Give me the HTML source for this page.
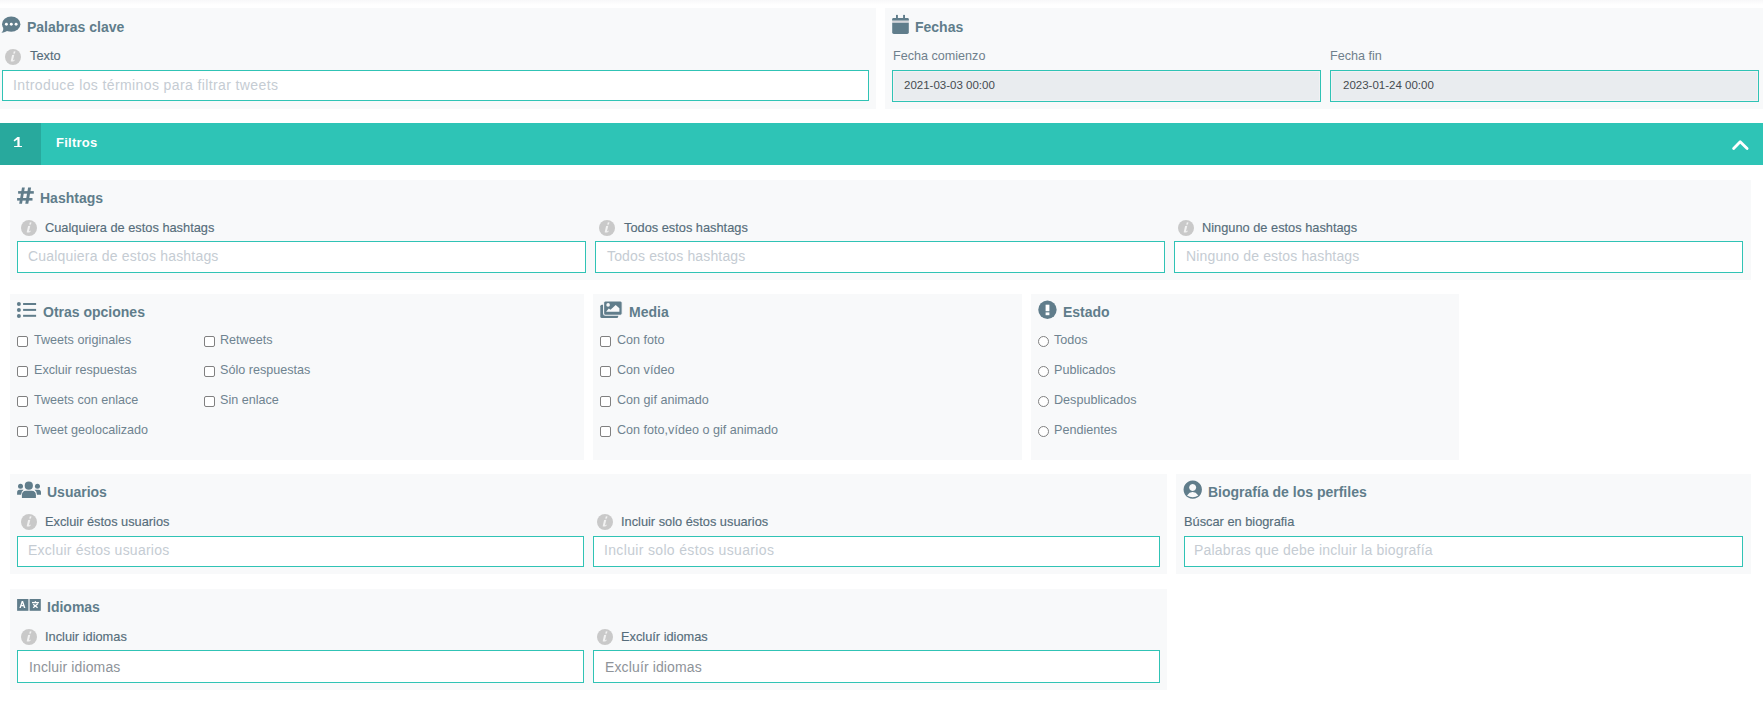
<!DOCTYPE html>
<html><head><meta charset="utf-8">
<style>
html,body{margin:0;padding:0;}
body{width:1763px;height:701px;background:#fff;position:relative;overflow:hidden;font-family:"Liberation Sans",sans-serif;}
.a{position:absolute;}
.p{position:absolute;background:#f8f9fa;}
.h{position:absolute;font-weight:700;font-size:14px;line-height:14px;color:#607d8b;white-space:nowrap;}
.l{position:absolute;font-size:12.8px;line-height:13px;color:#566d7b;white-space:nowrap;-webkit-text-stroke:0.15px #566d7b;}
.lf{position:absolute;font-size:12.6px;line-height:13px;margin-top:1px;color:#6f808c;white-space:nowrap;}
.in{position:absolute;box-sizing:border-box;border:1px solid #30c3b5;background:#fff;}
.ph{position:absolute;margin-left:-1px;font-size:14px;line-height:14px;color:#c5ccd3;white-space:nowrap;letter-spacing:0.15px;}
.ph2{position:absolute;font-size:14px;line-height:14px;color:#8e9399;white-space:nowrap;letter-spacing:0.13px;}
.dt{position:absolute;font-size:11.5px;line-height:12px;color:#454b50;white-space:nowrap;}
.info{position:absolute;width:16px;height:16px;}
.info svg{position:absolute;left:0;top:0;}
.cb{position:absolute;box-sizing:border-box;width:11px;height:11px;border:1px solid #808080;border-radius:2px;background:#fff;}
.rd{position:absolute;box-sizing:border-box;width:11px;height:11px;border:1px solid #808080;border-radius:50%;background:#fff;}
.ct{position:absolute;font-size:12.6px;line-height:13px;color:#6f8390;white-space:nowrap;}
svg{position:absolute;}
</style></head><body>
<div class="a" style="left:0;top:0;width:1763px;height:5px;background:linear-gradient(#f8f8f9,#fff)"></div>
<!-- top panels -->
<div class="p" style="left:0;top:8px;width:876px;height:101px"></div>
<div class="p" style="left:885px;top:8px;width:878px;height:101px"></div>
<div class="h" style="left:27px;top:20px">Palabras clave</div>
<div class="h" style="left:915px;top:20px">Fechas</div>
<div class="info" style="left:5px;top:49px"><svg width="16" height="16" viewBox="0 0 16 16"><circle cx="8" cy="8" r="8" fill="#c9c9c9"/><path d="M8.7 2.6 L10.4 2.2 L10 4.4 L8.3 4.8 Z M7.1 6 L9.3 5.8 L7.9 11.4 Q8.8 11.2 9.8 10.5 L9.3 11.9 Q7.8 12.7 6 12.6 L5.7 12.3 Z" fill="#f2f2f2"/></svg></div>
<div class="l" style="left:30px;top:49px">Texto</div>
<div class="in" style="left:2px;top:70px;width:867px;height:31px"></div>
<div class="ph" style="left:14px;top:78px;letter-spacing:0.39px">Introduce los términos para filtrar tweets</div>
<div class="lf" style="left:893px;top:49px">Fecha comienzo</div>
<div class="lf" style="left:1330px;top:49px">Fecha fin</div>
<div class="in" style="left:892px;top:70px;width:429px;height:32px;background:#e9ecef;box-shadow:inset 0 0 0 1px #f3f1f4"></div>
<div class="in" style="left:1330px;top:70px;width:429px;height:32px;background:#e9ecef;box-shadow:inset 0 0 0 1px #f3f1f4"></div>
<div class="dt" style="left:904px;top:79px">2021-03-03 00:00</div>
<div class="dt" style="left:1343px;top:79px">2023-01-24 00:00</div>

<!-- bar -->
<div class="a" style="left:0;top:123px;width:1763px;height:42px;background:#2ec4b6"></div>
<div class="a" style="left:0;top:123px;width:41px;height:42px;background:#28a99d"></div>
<svg style="left:0;top:0" width="41" height="165" viewBox="0 0 41 165"><path d="M17.4 137.1 L19.6 137.1 L19.6 146 L22 146 L22 147.1 L14.1 147.1 L14.1 146 L17.4 146 L17.4 139.4 L14.3 141.4 L13.6 140.3 Z" fill="#fff"/></svg>
<div class="a" style="left:56px;top:136px;font-weight:700;font-size:13px;line-height:13px;color:#fff;letter-spacing:0.25px">Filtros</div>
<svg style="left:1728px;top:134px" width="24" height="20" viewBox="0 0 24 20"><path d="M5.6 14.5 L12.2 7.7 L19.1 14.5" fill="none" stroke="#fff" stroke-width="2.8" stroke-linecap="round" stroke-linejoin="round"/></svg>

<!-- hashtags -->
<div class="p" style="left:10px;top:180px;width:1741px;height:100px"></div>
<div class="h" style="left:40px;top:191px">Hashtags</div>
<div class="info" style="left:21px;top:220px"><svg width="16" height="16" viewBox="0 0 16 16"><circle cx="8" cy="8" r="8" fill="#c9c9c9"/><path d="M8.7 2.6 L10.4 2.2 L10 4.4 L8.3 4.8 Z M7.1 6 L9.3 5.8 L7.9 11.4 Q8.8 11.2 9.8 10.5 L9.3 11.9 Q7.8 12.7 6 12.6 L5.7 12.3 Z" fill="#f2f2f2"/></svg></div>
<div class="l" style="left:45px;top:221px">Cualquiera de estos hashtags</div>
<div class="info" style="left:599px;top:220px"><svg width="16" height="16" viewBox="0 0 16 16"><circle cx="8" cy="8" r="8" fill="#c9c9c9"/><path d="M8.7 2.6 L10.4 2.2 L10 4.4 L8.3 4.8 Z M7.1 6 L9.3 5.8 L7.9 11.4 Q8.8 11.2 9.8 10.5 L9.3 11.9 Q7.8 12.7 6 12.6 L5.7 12.3 Z" fill="#f2f2f2"/></svg></div>
<div class="l" style="left:624px;top:221px">Todos estos hashtags</div>
<div class="info" style="left:1178px;top:220px"><svg width="16" height="16" viewBox="0 0 16 16"><circle cx="8" cy="8" r="8" fill="#c9c9c9"/><path d="M8.7 2.6 L10.4 2.2 L10 4.4 L8.3 4.8 Z M7.1 6 L9.3 5.8 L7.9 11.4 Q8.8 11.2 9.8 10.5 L9.3 11.9 Q7.8 12.7 6 12.6 L5.7 12.3 Z" fill="#f2f2f2"/></svg></div>
<div class="l" style="left:1202px;top:221px">Ninguno de estos hashtags</div>
<div class="in" style="left:17px;top:241px;width:569px;height:32px"></div>
<div class="in" style="left:595px;top:241px;width:570px;height:32px"></div>
<div class="in" style="left:1174px;top:241px;width:569px;height:32px"></div>
<div class="ph" style="left:29px;top:249px;letter-spacing:0.19px">Cualquiera de estos hashtags</div>
<div class="ph" style="left:608px;top:249px">Todos estos hashtags</div>
<div class="ph" style="left:1187px;top:249px">Ninguno de estos hashtags</div>

<!-- otras / media / estado -->
<div class="p" style="left:10px;top:294px;width:574px;height:166px"></div>
<div class="p" style="left:593px;top:294px;width:429px;height:166px"></div>
<div class="p" style="left:1031px;top:294px;width:428px;height:166px"></div>
<div class="h" style="left:43px;top:305px">Otras opciones</div>
<div class="h" style="left:629px;top:305px">Media</div>
<div class="h" style="left:1063px;top:305px">Estado</div>

<div class="cb" style="left:17px;top:336px"></div><div class="ct" style="left:34px;top:334px">Tweets originales</div>
<div class="cb" style="left:17px;top:366px"></div><div class="ct" style="left:34px;top:364px">Excluir respuestas</div>
<div class="cb" style="left:17px;top:396px"></div><div class="ct" style="left:34px;top:394px">Tweets con enlace</div>
<div class="cb" style="left:17px;top:426px"></div><div class="ct" style="left:34px;top:424px">Tweet geolocalizado</div>
<div class="cb" style="left:204px;top:336px"></div><div class="ct" style="left:220px;top:334px">Retweets</div>
<div class="cb" style="left:204px;top:366px"></div><div class="ct" style="left:220px;top:364px">Sólo respuestas</div>
<div class="cb" style="left:204px;top:396px"></div><div class="ct" style="left:220px;top:394px">Sin enlace</div>

<div class="cb" style="left:600px;top:336px"></div><div class="ct" style="left:617px;top:334px">Con foto</div>
<div class="cb" style="left:600px;top:366px"></div><div class="ct" style="left:617px;top:364px">Con vídeo</div>
<div class="cb" style="left:600px;top:396px"></div><div class="ct" style="left:617px;top:394px">Con gif animado</div>
<div class="cb" style="left:600px;top:426px"></div><div class="ct" style="left:617px;top:424px">Con foto,vídeo o gif animado</div>

<div class="rd" style="left:1038px;top:336px"></div><div class="ct" style="left:1054px;top:334px">Todos</div>
<div class="rd" style="left:1038px;top:366px"></div><div class="ct" style="left:1054px;top:364px">Publicados</div>
<div class="rd" style="left:1038px;top:396px"></div><div class="ct" style="left:1054px;top:394px">Despublicados</div>
<div class="rd" style="left:1038px;top:426px"></div><div class="ct" style="left:1054px;top:424px">Pendientes</div>

<!-- usuarios / bio -->
<div class="p" style="left:10px;top:474px;width:1157px;height:100px"></div>
<div class="p" style="left:1176px;top:474px;width:575px;height:100px"></div>
<div class="h" style="left:47px;top:485px">Usuarios</div>
<div class="h" style="left:1208px;top:485px">Biografía de los perfiles</div>
<div class="info" style="left:21px;top:514px"><svg width="16" height="16" viewBox="0 0 16 16"><circle cx="8" cy="8" r="8" fill="#c9c9c9"/><path d="M8.7 2.6 L10.4 2.2 L10 4.4 L8.3 4.8 Z M7.1 6 L9.3 5.8 L7.9 11.4 Q8.8 11.2 9.8 10.5 L9.3 11.9 Q7.8 12.7 6 12.6 L5.7 12.3 Z" fill="#f2f2f2"/></svg></div>
<div class="l" style="left:45px;top:515px">Excluir éstos usuarios</div>
<div class="info" style="left:597px;top:514px"><svg width="16" height="16" viewBox="0 0 16 16"><circle cx="8" cy="8" r="8" fill="#c9c9c9"/><path d="M8.7 2.6 L10.4 2.2 L10 4.4 L8.3 4.8 Z M7.1 6 L9.3 5.8 L7.9 11.4 Q8.8 11.2 9.8 10.5 L9.3 11.9 Q7.8 12.7 6 12.6 L5.7 12.3 Z" fill="#f2f2f2"/></svg></div>
<div class="l" style="left:621px;top:515px">Incluir solo éstos usuarios</div>
<div class="l" style="left:1184px;top:515px">Búscar en biografia</div>
<div class="in" style="left:17px;top:536px;width:567px;height:31px"></div>
<div class="in" style="left:593px;top:536px;width:567px;height:31px"></div>
<div class="in" style="left:1184px;top:536px;width:559px;height:31px"></div>
<div class="ph" style="left:29px;top:543px;letter-spacing:0.24px">Excluir éstos usuarios</div>
<div class="ph" style="left:605px;top:543px;letter-spacing:0.34px">Incluir solo éstos usuarios</div>
<div class="ph" style="left:1195px;top:543px;letter-spacing:0.2px">Palabras que debe incluir la biografía</div>

<!-- idiomas -->
<div class="p" style="left:10px;top:589px;width:1157px;height:101px"></div>
<div class="h" style="left:47px;top:600px">Idiomas</div>
<div class="info" style="left:21px;top:629px"><svg width="16" height="16" viewBox="0 0 16 16"><circle cx="8" cy="8" r="8" fill="#c9c9c9"/><path d="M8.7 2.6 L10.4 2.2 L10 4.4 L8.3 4.8 Z M7.1 6 L9.3 5.8 L7.9 11.4 Q8.8 11.2 9.8 10.5 L9.3 11.9 Q7.8 12.7 6 12.6 L5.7 12.3 Z" fill="#f2f2f2"/></svg></div>
<div class="l" style="left:45px;top:630px">Incluir idiomas</div>
<div class="info" style="left:597px;top:629px"><svg width="16" height="16" viewBox="0 0 16 16"><circle cx="8" cy="8" r="8" fill="#c9c9c9"/><path d="M8.7 2.6 L10.4 2.2 L10 4.4 L8.3 4.8 Z M7.1 6 L9.3 5.8 L7.9 11.4 Q8.8 11.2 9.8 10.5 L9.3 11.9 Q7.8 12.7 6 12.6 L5.7 12.3 Z" fill="#f2f2f2"/></svg></div>
<div class="l" style="left:621px;top:630px">Excluír idiomas</div>
<div class="in" style="left:17px;top:650px;width:567px;height:33px"></div>
<div class="in" style="left:593px;top:650px;width:567px;height:33px"></div>
<div class="ph2" style="left:29px;top:660px">Incluir idiomas</div>
<div class="ph2" style="left:605px;top:660px">Excluír idiomas</div>

<!-- ICONS -->
<!-- ICONS_START -->
<svg style="left:0;top:0;pointer-events:none" width="1763" height="701" viewBox="0 0 1763 701">
<g fill="#607d8b">
<!-- speech bubble -->
<ellipse cx="11.2" cy="24.15" rx="9.2" ry="7.55"/>
<path d="M3.2 27.2 C3.6 29.6 2.9 31.4 1.4 32.8 C3.9 32.6 6.2 31.8 8 30.6 Z"/>
<circle cx="6.4" cy="24.2" r="1.45" fill="#fff"/>
<circle cx="11.3" cy="24.2" r="1.45" fill="#fff"/>
<circle cx="16.1" cy="24.2" r="1.45" fill="#fff"/>
<!-- calendar -->
<rect x="896" y="14.9" width="1.9" height="4" />
<rect x="903.1" y="14.9" width="1.9" height="4" />
<path d="M892.2 19.3 Q892.2 18.1 893.4 18.1 L907.6 18.1 Q908.8 18.1 908.8 19.3 L908.8 20.7 L892.2 20.7 Z"/>
<rect x="892.2" y="20.7" width="16.6" height="2" fill="#d6d6da"/>
<path d="M892.2 22.7 L908.8 22.7 L908.8 32.3 Q908.8 33.9 907.2 33.9 L893.8 33.9 Q892.2 33.9 892.2 32.3 Z"/>
<!-- hashtag -->
<path d="M22 187.5 L24.8 187.5 L22 203.8 L19.2 203.8 Z M28.1 187.5 L31.1 187.5 L28.3 203.8 L25.3 203.8 Z"/>
<rect x="18.1" y="191.1" width="15.7" height="2.6"/>
<rect x="17.1" y="198" width="15.4" height="2.6"/>
<!-- list -->
<circle cx="18.9" cy="303.9" r="2"/>
<circle cx="18.9" cy="309.9" r="2"/>
<circle cx="18.9" cy="315.9" r="2"/>
<rect x="23.1" y="303" width="13" height="2"/>
<rect x="23.1" y="308.9" width="13" height="2"/>
<rect x="23.1" y="314.8" width="13" height="2"/>
<!-- images -->
<rect x="600.3" y="304.8" width="17.9" height="13.1" rx="1.5"/>
<rect x="603.6" y="301" width="18.6" height="14.2" rx="1.8" stroke="#f8f9fa" stroke-width="1.1"/>
<circle cx="608.1" cy="304.9" r="1.8" fill="#f8f9fa"/>
<path d="M606.1 311.8 L608.8 308.4 L610.5 309.7 L615.7 305 L619.4 308.3 L619.4 311.8 Z" fill="#f8f9fa"/>
<!-- exclamation circle -->
<circle cx="1047.45" cy="309.75" r="9.2"/>
<rect x="1045.6" y="304.7" width="3.8" height="6.5" fill="#fff"/>
<rect x="1045.6" y="312.4" width="3.8" height="2.8" fill="#fff"/>
<!-- users -->
<circle cx="28.8" cy="485.7" r="4.1"/>
<circle cx="20.5" cy="486.2" r="2.5"/>
<circle cx="37.45" cy="486.2" r="2.5"/>
<path d="M21.9 497.9 L21.9 495.3 Q21.9 490.8 26.1 490.8 L31.7 490.8 Q35.9 490.8 35.9 495.3 L35.9 497.9 Z"/>
<path d="M17.1 494.8 L17.1 492.5 Q17.1 489.8 19.6 489.8 L23.6 489.8 Q21.3 491.2 21.1 494.8 Z"/>
<path d="M41 494.8 L41 492.5 Q41 489.8 38.5 489.8 L34.5 489.8 Q36.8 491.2 37 494.8 Z"/>
<!-- user circle -->
<path fill-rule="evenodd" d="M1192.75 480.4 A9.2 9.2 0 1 1 1192.74 480.4 Z M1192.65 483.9 A3.5 3.5 0 1 0 1192.66 483.9 Z M1187 495.4 Q1189.5 491.9 1192.6 492 Q1195.8 491.9 1198.3 495.4 Q1195.8 497.2 1192.65 497.2 Q1189.5 497.2 1187 495.4 Z"/>
<!-- language -->
<rect x="17.1" y="599" width="11.3" height="11.8"/>
<rect x="29.6" y="599" width="11.2" height="11.8"/>
<path d="M19.4 607.9 L21.7 601 L23.1 601 L25.4 607.9 L23.9 607.9 L23.4 606.3 L21.3 606.3 L20.8 607.9 Z M21.7 605.1 L23 605.1 L22.35 603 Z" fill="#fff"/>
<g stroke="#fff" stroke-width="1.3" fill="none">
<line x1="32" y1="602.6" x2="38.9" y2="602.6"/>
<line x1="35.4" y1="601.2" x2="35.4" y2="602.6"/>
<line x1="33.2" y1="604.2" x2="37.6" y2="607.8"/>
<line x1="37.9" y1="603.6" x2="33.2" y2="607.8"/>
</g>
</g>
</svg>

<!-- ICONS_END -->
</body></html>
